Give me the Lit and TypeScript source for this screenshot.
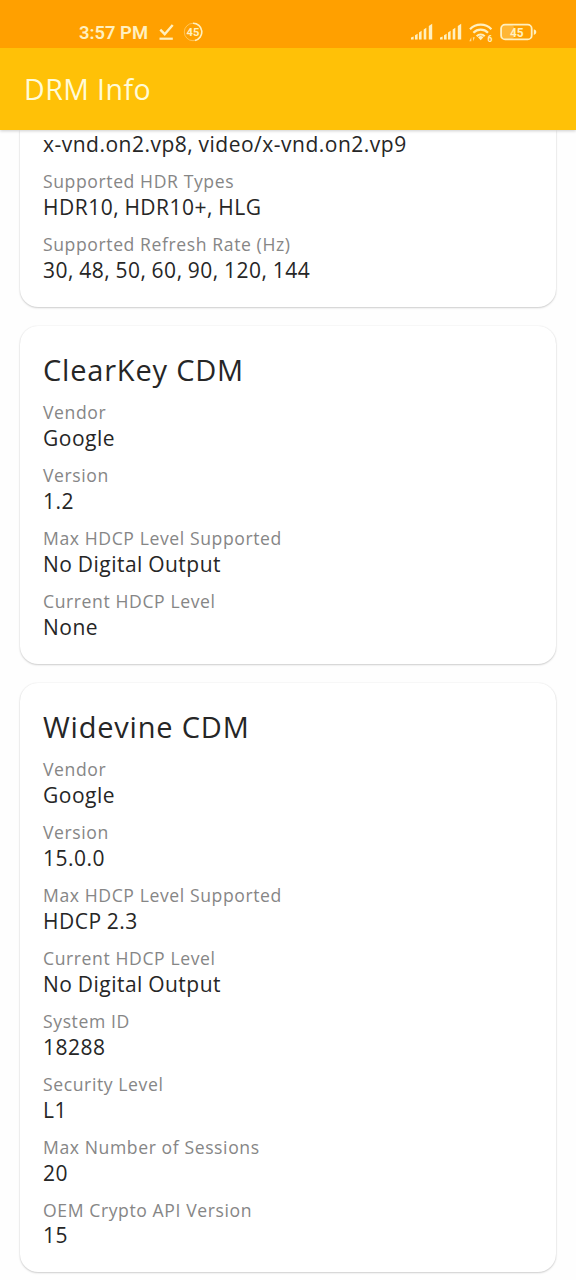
import { LitElement, html, css, svg } from "lit";
import { customElement, property } from "lit/decorators.js";

type Entry = [label: string, value: string];

@customElement("status-bar")
class StatusBar extends LitElement {
  static styles = css`
    :host {
      display: block;
      height: 48px;
      background: #ffa000;
    }
    svg {
      display: block;
    }
    .clock {
      font: 600 18px Roboto, sans-serif;
    }
    .tiny {
      font: 700 11px Roboto, sans-serif;
    }
    .level {
      font: 700 12.5px Roboto, sans-serif;
    }
    .six {
      font: 700 8.5px Roboto, sans-serif;
    }
  `;

  private signal(x: number) {
    return svg`<g transform="translate(${x} 0)" fill="#fff0c0">
      <path d="M0 39.5v-2l2.6-1v3z"/>
      <path d="M4 39.5v-4.2l2.6-1.6v5.8z"/>
      <path d="M8 39.5v-7l2.6-1.8v8.8z"/>
      <path d="M12.7 39.5v-10l2.6-1.8v11.8z"/>
      <path d="M17.8 39.5V26l3.4-2.2v15.7z"/>
    </g>`;
  }

  render() {
    return html`<svg width="576" height="48" viewBox="0 0 576 48" fill="#fff0c0">
      <text class="clock" x="79" y="38.8" textLength="69" lengthAdjust="spacingAndGlyphs">3:57 PM</text>
      <g fill="none" stroke="#fff0c0">
        <path d="M160.3 29.7l4.4 4.5 8-9.2" stroke-width="2.4" />
        <path d="M159.5 38.7h13.3" stroke-width="2.2" />
        <circle cx="193" cy="32" r="8.7" stroke-width="1" stroke-opacity=".45" />
        <path d="M193 23.3a8.7 8.7 0 0 1 2 17.2" stroke-width="1.6" />
      </g>
      <text class="tiny" x="186.6" y="36" textLength="12.8" lengthAdjust="spacingAndGlyphs">45</text>
      ${this.signal(411)} ${this.signal(440)}
      <g fill="none" stroke="#fff0c0" stroke-width="2.2">
        <path d="M470 29.2a15 15 0 0 1 21.4 0" />
        <path d="M473.4 32.8a10.2 10.2 0 0 1 14.6 0" />
        <path d="M476.7 36.2a5.6 5.6 0 0 1 8 0" />
      </g>
      <path d="M478 37.2a4 4 0 0 1 5.4 0l-2.7 3.1z" />
      <path d="M469.3 41.2l2-4v4zM472.8 37.2h2l-1.4 4z" fill-opacity=".75" />
      <text class="six" x="487.4" y="41.6">6</text>
      <rect x="502" y="25" width="12" height="14" rx="3" fill-opacity=".28" />
      <rect x="501.1" y="24.6" width="30.6" height="14.8" rx="4" fill="none" stroke="#fff0c0" stroke-width="1.8" />
      <path d="M533.8 29.3q2.6.5 2.6 2.8t-2.6 2.8z" />
      <text class="level" x="510" y="36.6" textLength="13.6" lengthAdjust="spacingAndGlyphs">45</text>
    </svg>`;
  }
}

@customElement("info-card")
class InfoCard extends LitElement {
  @property() heading = "";
  @property({ attribute: false }) entries: Entry[] = [];

  static styles = css`
    :host {
      display: block;
      box-sizing: border-box;
      padding: 24px 23px 23px;
      border-radius: 18px;
      background: #fff;
      box-shadow: 0 1px 2px rgba(0, 0, 0, 0.18), 0 0 1.5px rgba(0, 0, 0, 0.1);
    }
    h2 {
      margin: 0 0 10.8px;
      font-size: 29px;
      font-weight: 400;
      line-height: 39.5px;
      letter-spacing: 0.8px;
      color: #262626;
    }
    dl {
      display: flex;
      flex-direction: column;
      gap: 10.5px;
      margin: 0;
    }
    dt {
      font-size: 17.6px;
      font-weight: 400;
      line-height: 25.2px;
      letter-spacing: 0.59px;
      color: #868686;
    }
    dd {
      margin: 0;
      font-size: 21px;
      font-weight: 400;
      line-height: 28.6px;
      letter-spacing: 0.5px;
      word-spacing: -0.7px;
      color: #262626;
    }
    dt + dd {
      margin-top: -1.4px;
    }
  `;

  render() {
    return html`
      ${this.heading ? html`<h2>${this.heading}</h2>` : ""}
      <dl>
        ${this.entries.map(
          ([label, value]) => html`<div>${label ? html`<dt>${label}</dt>` : ""}<dd>${value}</dd></div>`
        )}
      </dl>
    `;
  }
}

@customElement("app-root")
class AppRoot extends LitElement {
  static styles = css`
    :host {
      display: flex;
      flex-direction: column;
      height: 1280px;
      overflow: hidden;
      background: #fefefe;
      font-family: "Open Sans", "Noto Sans", sans-serif;
    }
    header {
      position: relative;
      z-index: 1;
      flex: none;
      background: #ffc107;
      box-shadow: 0 1px 3px rgba(0, 0, 0, 0.2);
    }
    h1 {
      display: flex;
      align-items: center;
      height: 82px;
      margin: 0;
      padding-left: 24px;
      font-size: 28.5px;
      font-weight: 400;
      letter-spacing: 0.45px;
      color: #fffbd8;
    }
    main {
      display: flex;
      flex-direction: column;
      gap: 19px;
      padding: 0 20px;
    }
    info-card {
      flex: none;
    }
    .scrolled {
      height: 177px;
      padding-top: 0.2px;
      border-top-left-radius: 0;
      border-top-right-radius: 0;
    }
    .clearkey {
      height: 338px;
    }
    .widevine {
      height: 589px;
    }
  `;

  private media: Entry[] = [
    ["", "x-vnd.on2.vp8, video/x-vnd.on2.vp9"],
    ["Supported HDR Types", "HDR10, HDR10+, HLG"],
    ["Supported Refresh Rate (Hz)", "30, 48, 50, 60, 90, 120, 144"],
  ];

  private clearkey: Entry[] = [
    ["Vendor", "Google"],
    ["Version", "1.2"],
    ["Max HDCP Level Supported", "No Digital Output"],
    ["Current HDCP Level", "None"],
  ];

  private widevine: Entry[] = [
    ["Vendor", "Google"],
    ["Version", "15.0.0"],
    ["Max HDCP Level Supported", "HDCP 2.3"],
    ["Current HDCP Level", "No Digital Output"],
    ["System ID", "18288"],
    ["Security Level", "L1"],
    ["Max Number of Sessions", "20"],
    ["OEM Crypto API Version", "15"],
  ];

  render() {
    return html`
      <header>
        <status-bar></status-bar>
        <h1>DRM Info</h1>
      </header>
      <main>
        <info-card class="scrolled" .entries=${this.media}></info-card>
        <info-card class="clearkey" heading="ClearKey CDM" .entries=${this.clearkey}></info-card>
        <info-card class="widevine" heading="Widevine CDM" .entries=${this.widevine}></info-card>
      </main>
    `;
  }
}
